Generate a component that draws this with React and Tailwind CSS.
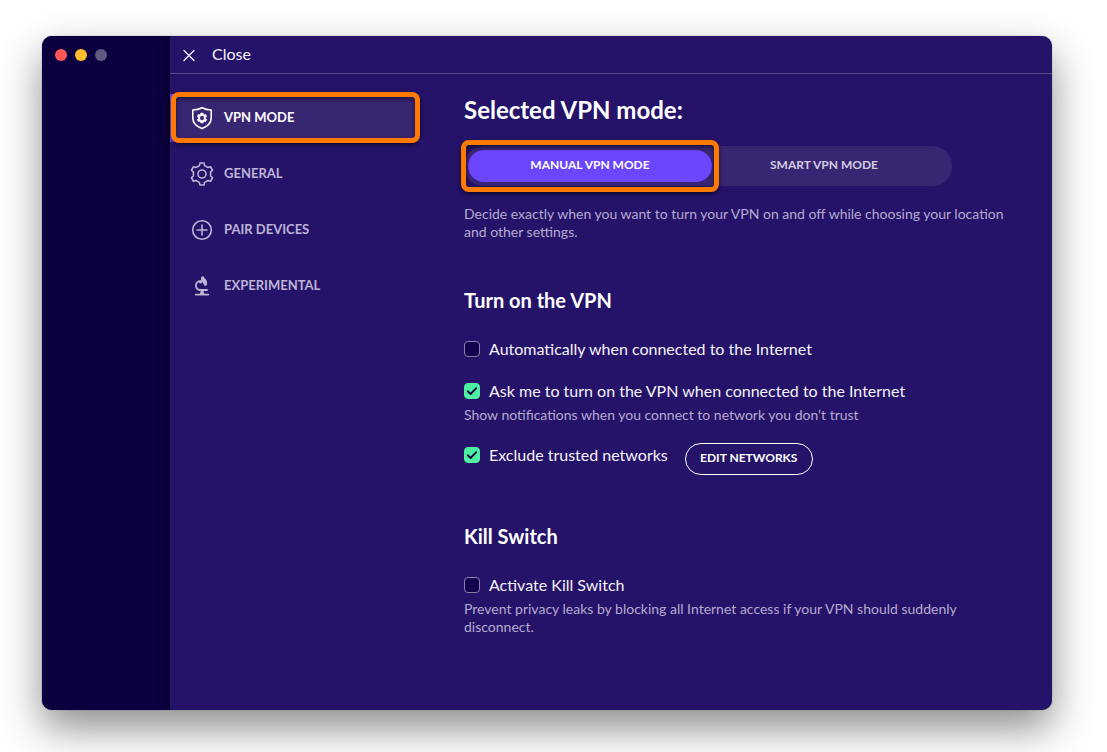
import React, { useState } from 'react';

const ShieldIcon = () => (
    <svg viewBox="0 0 24 24" className="size-6 shrink-0" fill="none" aria-hidden="true">
        <path d="M12 1.8C9.3 3.3 6 4 2.8 4V12c0 4.8 3.7 8.4 9.2 10.6 5.5-2.2 9.2-5.8 9.2-10.6V4C18 4 14.7 3.3 12 1.8Z" stroke="currentColor" strokeWidth="1.6" strokeLinejoin="round" />
        <path d="M11 9.3 11.2 7.7H12.8L13 9.3 13.7 9.7 15.2 9 16 10.4 14.7 11.4V12.6L16 13.6 15.2 15 13.7 14.3 13 14.7 12.8 16.3H11.2L11 14.7 10.3 14.3 8.8 15 8 13.6 9.3 12.6V11.4L8 10.4 8.800 9 10.3 9.7Z" stroke="currentColor" strokeWidth="1.8" strokeLinejoin="round" />
    </svg>
);

const GearIcon = () => (
    <svg viewBox="0 0 24 24" className="size-6 shrink-0" fill="none" stroke="currentColor" strokeWidth="1.6" strokeLinejoin="round" aria-hidden="true">
        <path d="M9.4 3.6 10 1H14L14.6 3.6 17.97 5.55 20.53 4.77 22.53 8.23 20.57 10.05V13.95L22.53 15.77 20.53 19.23 17.97 18.45 14.6 20.4 14 23H10L9.4 20.4 6.03 18.45 3.47 19.23 1.47 15.77 3.43 13.95V10.05L1.47 8.23 3.47 4.77 6.03 5.55Z" />
        <circle cx="12" cy="12" r="4" />
    </svg>
);

const PlusIcon = () => (
    <svg viewBox="0 0 24 24" className="size-6 shrink-0" fill="none" stroke="currentColor" strokeWidth="1.6" strokeLinecap="round" aria-hidden="true">
        <circle cx="12" cy="12" r="9.3" />
        <path d="M12 7v10M7 12h10" />
    </svg>
);

const MicroscopeIcon = () => (
    <svg viewBox="0 0 24 24" className="size-6 shrink-0" fill="none" stroke="currentColor" strokeLinecap="round" aria-hidden="true">
        <path d="M5.7 20.6h12.6" strokeWidth="1.7" />
        <path d="M9.7 20 10.8 17h2.6L14.500 20Z" fill="currentColor" stroke="none" />
        <path d="M8.6 7.2C6 8.4 5 11.700 6.600 14.100c.7 1.1 1.700 1.800 2.900 1.900H17" strokeWidth="1.8" />
        <path d="M11.2 3 13.2 1.900 14.400 4C16.400 5.200 17.500 8 17.100 11L14.700 12 13.200 9.400 11 5.600Z" fill="currentColor" stroke="none" />
        <circle cx="10.6" cy="7.7" r="1.8" fill="currentColor" stroke="none" />
    </svg>
);

const NAV_ITEMS = [
    { id: 'vpn', label: 'VPN MODE', Icon: ShieldIcon },
    { id: 'general', label: 'GENERAL', Icon: GearIcon },
    { id: 'pair', label: 'PAIR DEVICES', Icon: PlusIcon },
    { id: 'experimental', label: 'EXPERIMENTAL', Icon: MicroscopeIcon },
];

const Highlight = ({ className }) => (
    <span className={`pointer-events-none absolute rounded-lg border-[5px] border-[#ff7a00] shadow-[0_2px_5px_rgba(0,0,0,0.6),inset_0_2px_5px_rgba(0,0,0,0.5)] ${className}`} />
);

const Checkbox = ({ label, checked, onChange }) => (
    <label className="flex items-center gap-[9px] text-base leading-6 text-[#f4f2f8]">
        <span className="grid size-4 shrink-0">
            <input
                type="checkbox"
                checked={checked}
                onChange={onChange}
                className="col-start-1 row-start-1 size-4 appearance-none rounded border border-[#8a80b0] bg-[#12004c] checked:border-[#4df0a0] checked:bg-[#4df0a0]"
            />
            {checked && (
                <svg viewBox="0 0 16 16" className="pointer-events-none col-start-1 row-start-1 size-4" fill="none" aria-hidden="true">
                    <path d="M3.8 8.3 6.6 11 12.2 5.2" stroke="#0c0040" strokeWidth="1.900" strokeLinecap="round" strokeLinejoin="round" />
                </svg>
            )}
        </span>
        {label}
    </label>
);

const App = () => {
    const [page, setPage] = useState('vpn');
    const [mode, setMode] = useState('manual');
    const [settings, setSettings] = useState({ auto: false, ask: true, exclude: true, kill: false });

    const toggle = (key) => setSettings({ ...settings, [key]: !settings[key] });

    return (
        <div className="flex min-h-screen bg-white pt-9 pr-[55px] pb-[42px] pl-[42px] font-['Lato',sans-serif]">
            <div className="flex flex-1 overflow-hidden rounded-[10px] bg-[#25136a] shadow-[0_0_1px_rgba(0,0,0,0.6),0_18px_40px_rgba(0,0,0,0.45)]">

                {/* Window controls */}
                <div className="w-32 shrink-0 bg-[#0c0040] px-[13px] py-[13px] shadow-[inset_-8px_0_8px_-4px_rgba(0,0,0,0.3)]">
                    <div className="flex gap-2">
                        <button aria-label="Close window" className="size-3 rounded-full bg-[#ff5656]" />
                        <button aria-label="Minimize window" className="size-3 rounded-full bg-[#ffbd2e]" />
                        <button aria-label="Zoom window" disabled className="size-3 rounded-full bg-[#625880]" />
                    </div>
                </div>

                <div className="flex min-w-0 flex-1 flex-col">
                    <header className="flex h-[38px] items-center border-b border-[#574987] px-3">
                        <button className="flex items-center gap-4 text-base leading-6 text-[#f4f2f8]">
                            <svg viewBox="0 0 14 14" className="size-3.5" fill="none" stroke="currentColor" strokeWidth="1.3" strokeLinecap="round" aria-hidden="true">
                                <path d="M2 2.5l10 10M12 2.5l-10 10" />
                            </svg>
                            <span className="pb-0.5">Close</span>
                        </button>
                    </header>

                    <div className="flex flex-1 pt-5">
                        <nav className="flex w-[250px] shrink-0 flex-col gap-2">
                            {NAV_ITEMS.map(({ id, label, Icon }) => (
                                <button
                                    key={id}
                                    onClick={() => setPage(id)}
                                    className={`relative flex h-12 items-center gap-2.5 border-l-4 pl-4 text-[13px] font-bold ${page === id ? 'border-[#6c45ff] bg-[#392673] text-white' : 'border-transparent text-[#bdb4d6]'}`}
                                >
                                    <Icon />
                                    {label}
                                    {page === id && <Highlight className="-top-0.5 right-0 -bottom-px -left-[3px]" />}
                                </button>
                            ))}
                        </nav>

                        <main className="min-w-0 flex-1 pr-10 pb-10 pl-11">
                            <h1 className="text-2xl leading-8 font-bold text-white">Selected VPN mode:</h1>

                            <div className="mt-5 flex h-10 max-w-[488px] rounded-full bg-[#392673] p-1">
                                <button
                                    onClick={() => setMode('manual')}
                                    className={`relative basis-[244px] rounded-full pb-0.5 text-xs font-bold ${mode === 'manual' ? 'bg-[#6c45ff] text-white' : 'text-[#d3cde2]'}`}
                                >
                                    MANUAL VPN MODE
                                    {mode === 'manual' && <Highlight className="-inset-x-[7px] -inset-y-2.5" />}
                                </button>
                                <button
                                    onClick={() => setMode('smart')}
                                    className={`relative flex-1 rounded-full pr-3 pb-0.5 text-xs font-bold ${mode === 'smart' ? 'bg-[#6c45ff] text-white' : 'text-[#d3cde2]'}`}
                                >
                                    SMART VPN MODE
                                    {mode === 'smart' && <Highlight className="-inset-x-[7px] -inset-y-2.5" />}
                                </button>
                            </div>
                            <p className="mt-[19px] text-sm leading-[18px] text-[#b5aacf]">
                                Decide exactly when you want to turn your VPN on and off while choosing your location and other settings.
                            </p>

                            <section className="mt-[45px]">
                                <h2 className="text-xl leading-7 font-bold text-white">Turn on the VPN</h2>
                                <div className="mt-[23px]">
                                    <Checkbox label="Automatically when connected to the Internet" checked={settings.auto} onChange={() => toggle('auto')} />
                                </div>
                                <div className="mt-[18px]">
                                    <Checkbox label="Ask me to turn on the VPN when connected to the Internet" checked={settings.ask} onChange={() => toggle('ask')} />
                                    <p className="mt-[3px] text-sm leading-[18px] text-[#b5aacf]">
                                        Show notifications when you connect to network you don’t trust
                                    </p>
                                </div>
                                <div className="mt-[19px] flex items-start gap-[17px]">
                                    <Checkbox label="Exclude trusted networks" checked={settings.exclude} onChange={() => toggle('exclude')} />
                                    <button className="h-8 w-32 rounded-full border border-white pb-0.5 text-xs font-bold text-white">EDIT NETWORKS</button>
                                </div>
                            </section>

                            <section className="mt-[47px]">
                                <h2 className="text-xl leading-7 font-bold text-white">Kill Switch</h2>
                                <div className="mt-[23px]">
                                    <Checkbox label="Activate Kill Switch" checked={settings.kill} onChange={() => toggle('kill')} />
                                    <p className="mt-[3px] text-sm leading-[18px] text-[#b5aacf]">
                                        Prevent privacy leaks by blocking all Internet access if your VPN should suddenly disconnect.
                                    </p>
                                </div>
                            </section>
                        </main>
                    </div>
                </div>
            </div>
        </div>
    );
};

export default App;
